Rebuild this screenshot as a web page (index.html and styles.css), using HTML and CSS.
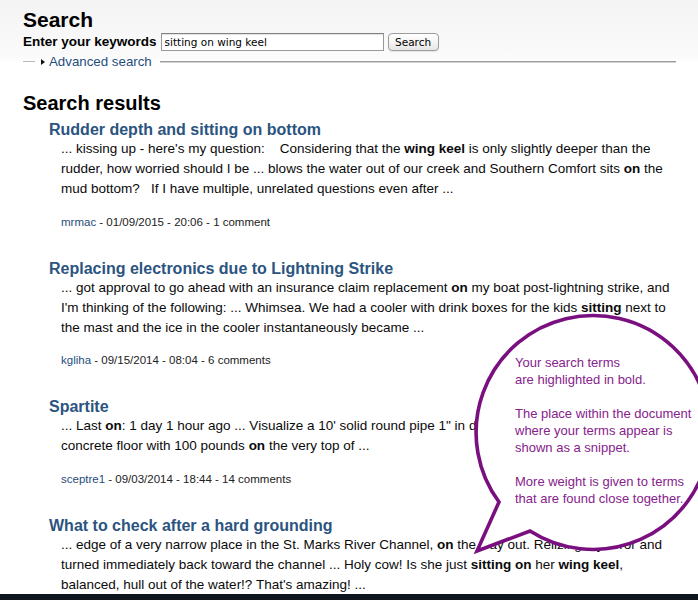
FILE: index.html
```html
<!DOCTYPE html>
<html lang="en">
<head>
<meta charset="utf-8">
<title>Search</title>
<link rel="stylesheet" href="styles.css">
</head>
<body>
<div class="page">
  <h1 class="page-title">Search</h1>
  <form class="search-form">
    <label class="kw-label" for="kw">Enter your keywords</label>
    <input id="kw" class="kw-input" type="text" value="sitting on wing keel">
    <button class="kw-btn" type="button">Search</button>
  </form>
  <div class="adv">
    <span class="adv-line-short"></span>
    <span class="adv-tri"></span>
    <a class="adv-link" href="#">Advanced search</a>
    <span class="adv-line"></span>
  </div>

  <h2 class="results-title">Search results</h2>
  <ol class="results">
    <li class="result">
      <h3 class="result-title"><a href="#">Rudder depth and sitting on bottom</a></h3>
      <p class="snippet">... kissing up - here's my question:&nbsp;&nbsp;&nbsp; Considering that the <b>wing keel</b> is only slightly deeper than the rudder, how worried should I be ... blows the water out of our creek and Southern Comfort sits <b>on</b> the mud bottom?&nbsp;&nbsp; If I have multiple, unrelated questions even after ...</p>
      <p class="meta"><a class="user" href="#">mrmac</a> - 01/09/2015 - 20:06 - 1 comment</p>
    </li>
    <li class="result">
      <h3 class="result-title"><a href="#">Replacing electronics due to Lightning Strike</a></h3>
      <p class="snippet">... got approval to go ahead with an insurance claim replacement <b>on</b> my boat post-lightning strike, and I'm thinking of the following: ... Whimsea. We had a cooler with drink boxes for the kids <b>sitting</b> next to the mast and the ice in the cooler instantaneously became ...</p>
      <p class="meta"><a class="user" href="#">kgliha</a> - 09/15/2014 - 08:04 - 6 comments</p>
    </li>
    <li class="result">
      <h3 class="result-title"><a href="#">Spartite</a></h3>
      <p class="snippet">... Last <b>on</b>: 1 day 1 hour ago ... Visualize a 10' solid round pipe 1" in diameter standing upright on a concrete floor with 100 pounds <b>on</b> the very top of ...</p>
      <p class="meta"><a class="user" href="#">sceptre1</a> - 09/03/2014 - 18:44 - 14 comments</p>
    </li>
    <li class="result">
      <h3 class="result-title"><a href="#">What to check after a hard grounding</a></h3>
      <p class="snippet">... edge of a very narrow place in the St. Marks River Channel, <b>on</b> the way out. Relizing my error and turned immediately back toward the channel ... Holy cow! Is she just <b>sitting on</b> her <b>wing keel</b>, balanced, hull out of the water!? That's amazing! ...</p>
    </li>
  </ol>
</div>

<div class="bubble">
  <svg class="bubble-shape" width="228" height="250" viewBox="0 0 228 250" aria-hidden="true">
    <path d="M29 192 L7 241 L60 221 A117 117 0 1 0 29 192 Z" fill="#fff" stroke="#7a1080" stroke-width="3.6" stroke-linejoin="miter" stroke-miterlimit="10"/>
  </svg>
  <p class="bubble-text">Your search terms<br>are highlighted in bold.<br><br>The place within the document<br>where your terms appear is<br>shown as a snippet.<br><br>More weight is given to terms<br>that are found close together.</p>
</div>

<div class="footer-bar"></div>
</body>
</html>
```

FILE: styles.css
```css
html, body {
  margin: 0;
  padding: 0;
}

body {
  font-family: "Liberation Sans", Arial, Helvetica, sans-serif;
  color: #000;
  background: #fff linear-gradient(to bottom, #f3f3f3 0px, #fbfbfb 58px, #ffffff 62px) no-repeat;
  background-size: 100% 62px;
  overflow: hidden;
  height: 600px;
}

.page {
  padding: 8px 22px 0 23px;
}

.page-title {
  margin: 0;
  font-size: 21px;
  line-height: 24px;
  font-weight: bold;
}

.search-form {
  margin: 1px 0 0;
  display: flex;
  align-items: center;
  height: 18px;
}

.kw-label {
  font-size: 13.5px;
  font-weight: bold;
  line-height: 18px;
  margin-right: 4px;
}

.kw-input {
  box-sizing: border-box;
  width: 223px;
  height: 18px;
  margin: 0;
  padding: 0 0 0 3px;
  border: 1px solid #9a9a9a;
  border-top-color: #808080;
  box-shadow: inset 0 1px 1px rgba(0,0,0,0.12);
  background: #fff;
  font-family: "DejaVu Sans", "Liberation Sans", sans-serif;
  font-size: 10.5px;
  color: #000;
  outline: none;
}

.kw-btn {
  box-sizing: border-box;
  margin: 0 0 0 4px;
  width: 51px;
  height: 18px;
  padding: 0;
  border: 1px solid #9c9c9c;
  border-radius: 4px;
  background: linear-gradient(to bottom, #ffffff 0%, #f4f4f4 50%, #e6e6e6 100%);
  box-shadow: 0 1px 1px rgba(0,0,0,0.08);
  font-family: "DejaVu Sans", "Liberation Sans", sans-serif;
  font-size: 10.5px;
  color: #000;
}

.adv {
  margin-top: 2.5px;
  height: 16px;
  display: flex;
  align-items: center;
}

.adv-line-short {
  width: 12px;
  height: 1px;
  background: #b8b8b8;
}

.adv-tri {
  width: 0;
  height: 0;
  margin-left: 6px;
  margin-right: 4px;
  border-left: 4px solid #111;
  border-top: 3.5px solid transparent;
  border-bottom: 3.5px solid transparent;
}

.adv-link {
  font-size: 13.3px;
  line-height: 16px;
  color: #1f4d7c;
  text-decoration: none;
}

.adv-line {
  flex: 1;
  height: 1px;
  margin-left: 8px;
  background: #9a9a9a;
  box-shadow: 0 1px 0 #d4d4d4;
}

.results-title {
  margin: 22.5px 0 0;
  font-size: 20px;
  line-height: 23px;
  font-weight: bold;
}

.results {
  list-style: none;
  margin: 5px 0 0;
  padding: 0 0 0 26px;
}

.result {
  margin: 0 0 30px;
}

.result-title {
  margin: 0;
  font-size: 16px;
  line-height: 19px;
  font-weight: bold;
}

.result-title a {
  color: #2b5480;
  text-decoration: none;
}

.snippet {
  margin: 0;
  padding-left: 12px;
  font-size: 13.5px;
  line-height: 20px;
  color: #0a0a0a;
}

.snippet b {
  font-weight: bold;
}

.meta {
  margin: 15.5px 0 0;
  padding-left: 12px;
  font-size: 11.5px;
  line-height: 14px;
  color: #222;
}

.meta .user {
  color: #1f4d7c;
  text-decoration: none;
}

.bubble {
  position: absolute;
  left: 470px;
  top: 310px;
  width: 228px;
  height: 250px;
}

.bubble-shape {
  display: block;
}

.bubble-text {
  position: absolute;
  left: 45px;
  top: 44px;
  margin: 0;
  font-size: 13px;
  line-height: 17px;
  color: #86228c;
  white-space: nowrap;
}

.footer-bar {
  position: fixed;
  left: 0;
  right: 0;
  bottom: 0;
  height: 6px;
  background: #0f151c;
}
```
